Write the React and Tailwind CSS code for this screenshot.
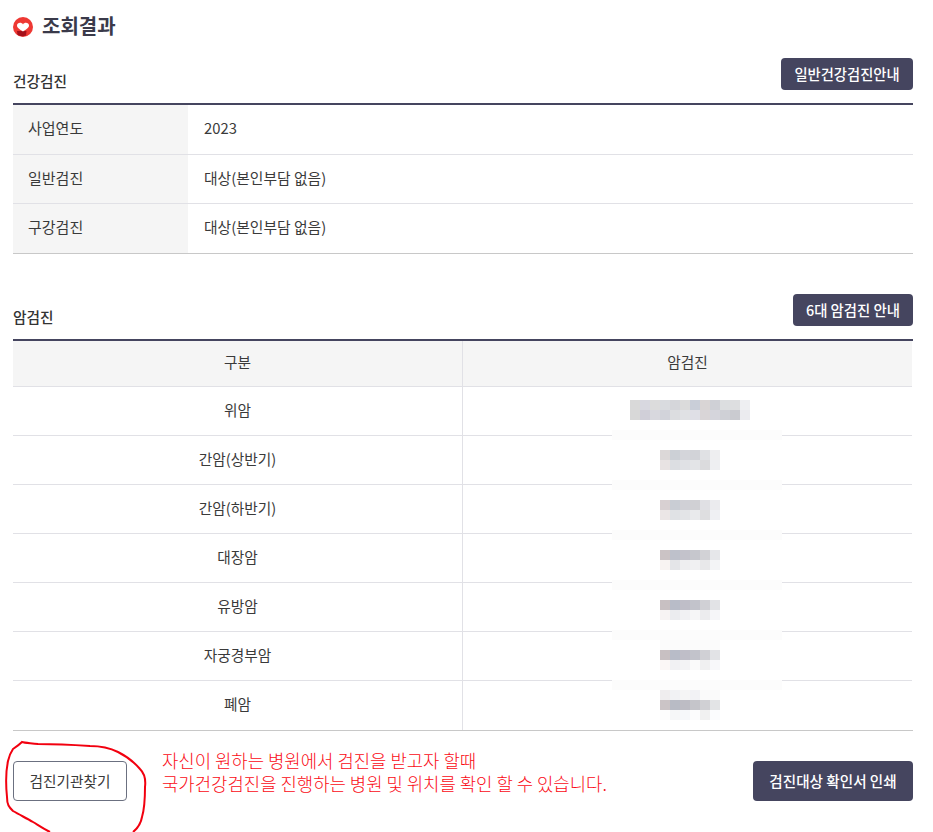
import React from 'react';

const font = { fontFamily: '"Noto Sans CJK KR", "Noto Sans", sans-serif' };

const infoRows = [
  { label: '사업연도', value: '2023', row: 'h-[50px] border-b border-[#e1e1e6]', pad: 'pb-[3px]' },
  { label: '일반검진', value: '대상(본인부담 없음)', row: 'h-[49px] border-b border-[#e1e1e6]', pad: 'pb-[2px]' },
  { label: '구강검진', value: '대상(본인부담 없음)', row: 'h-[49px]', pad: 'pb-[3px]' },
];

// blurred cells, one colour per 10px block
const soft = ['#efedee', '#f1f2f4', '#f5f5f5', '#f2f2f5', '#fafafa', '#fafafa'];
const cancerRows = [
  { name: '위암', pad: 'pt-[13px]', patch: 'top-[43px]', blur: [
    ['#d9d9d9', '#d8d8e0', '#dcdcdc', '#d9dbdf', '#d5d6da', '#dbdbdb', '#c9ced8', '#d9d5d5', '#cfd0d6', '#dcdee0', '#dddee0', '#eeeff2'],
    ['#d8d8d8', '#d0cfd8', '#d8d8de', '#d2d3da', '#dcdde0', '#e0e1e4', '#dfdfe6', '#d9d5d7', '#d5d5dc', '#cfd0d6', '#cacbd0', '#ebebef'],
  ] },
  { name: '간암(상반기)', pad: 'pt-[14px]', patch: 'top-[44px]', blur: [
    ['#dcd8d8', '#ccd0d6', '#d4d5da', '#d2d3d8', '#e0e1e4', '#eeeef0'],
    ['#e8e3e3', '#dcdee2', '#e0e1e5', '#e3e4e7', '#dbdbdd', '#eeeff2'],
  ] },
  { name: '간암(하반기)', pad: 'pt-[15px]', patch: 'top-[45px]', blur: [
    ['#d8d0d2', '#c9cdd4', '#d0d0d6', '#d0d0d4', '#e0e0e4', '#ebebee'],
    ['#ebe6e6', '#e0e2e5', '#e3e4e7', '#e9eaec', '#dedee0', '#eff0f3'],
  ] },
  { name: '대장암', pad: 'pt-[16px]', patch: 'top-[46px]', blur: [
    ['#cbc3c5', '#bec1cb', '#c3c2cb', '#c6c7cd', '#d2d2d6', '#e6e7ea'],
    ['#f8f3f2', '#e4e5e8', '#eeeef0', '#f0f0f2', '#e8e8ea', '#f3f4f6'],
  ] },
  { name: '유방암', pad: 'pt-[17px]', patch: 'top-[47px]', blur: [
    ['#c8c0c2', '#b8bcc8', '#bfbec8', '#c2c3cb', '#d0d0d5', '#e2e3e6'],
    ['#f7f3f3', '#ebecef', '#f1f1f3', '#f6f6f7', '#ececee', '#f6f6f9'],
  ] },
  { name: '자궁경부암', pad: 'pt-[8px]', patch: 'top-[48px]', blur: [
    soft.map(() => '#fbfbfb'),
    ['#c8c0c2', '#b8bcc8', '#bfbec8', '#c2c3cb', '#d0d0d5', '#e2e3e6'],
    ['#fbf7f6', '#f1f1f3', '#f3f3f5', '#fafafa', '#f0f0f1', '#f8f8fa'],
  ] },
  { name: '폐암', pad: 'pt-[9px]', blur: [
    soft,
    ['#cbc4c6', '#b8bbc5', '#bdbcc4', '#c5c5ca', '#d0d0d4', '#e3e4e6'],
    ['#fdfdfd', '#f6f7f8', '#f6f8fa', '#fcfcfd', '#f1f1f1', '#fbfcfe'],
  ] },
];

function HeartBadge() {
  return (
    <svg width="20" height="20" viewBox="0 0 20 20" className="mt-[2px] shrink-0">
      <circle cx="10" cy="10" r="10" fill="#ee3833" />
      <path d="M4 14 L13.5 14 L13 18.5 Q8 20 4.5 18 Z" fill="#a5101a" />
      <path d="M10 14.5 C7.5 13 4 11 4 8.6 C4 5.4 8.6 5 10 7.4 C11.4 5 16 5.4 16 8.6 C16 11 12.5 13 10 14.5 Z" fill="#fff" />
    </svg>
  );
}

function DarkButton({ className, children }) {
  return (
    <button className={`bg-[#45455f] text-white font-medium rounded-[4px] ${className}`}>
      {children}
    </button>
  );
}

function Mosaic({ rows }) {
  return (
    <div className="flex flex-col">
      {rows.map((row, i) => (
        <div key={i} className="flex">
          {row.map((c, j) => (
            <div key={j} className="w-[10px] h-[10px]" style={{ background: c }} />
          ))}
        </div>
      ))}
    </div>
  );
}

function SectionHead({ title, action, actionClass }) {
  return (
    <div className="flex items-start justify-between h-[32px]">
      <h3 className="text-[14.7px] font-medium text-[#333] mt-[13px] leading-5">{title}</h3>
      <DarkButton className={actionClass}>{action}</DarkButton>
    </div>
  );
}

export default function App() {
  return (
    <div className="w-[933px] h-[832px] overflow-hidden bg-white relative text-[#3a3a3a]" style={font}>
      <div className="pl-[13px] pr-5">
        <div className="flex items-start gap-[9px] pt-[15px] h-[58px]">
          <HeartBadge />
          <h2 className="text-[20px] leading-[22px] font-bold text-[#3a3a4a]">조회결과</h2>
        </div>

        <SectionHead title="건강검진" action="일반건강검진안내" actionClass="w-[132px] h-[32px] text-[14.3px]" />
        <div className="mt-[13px] border-t-2 border-[#45455f] border-b border-b-[#c8c8c8]">
          {infoRows.map((r) => (
            <div key={r.label} className={`flex ${r.row}`}>
              <div className={`w-[175px] bg-[#f5f5f5] pl-[15px] flex items-center text-[15px] ${r.pad}`}>{r.label}</div>
              <div className={`pl-[16px] flex items-center text-[14.8px] ${r.pad}`}>{r.value}</div>
            </div>
          ))}
        </div>

        <div className="mt-[40px]">
          <SectionHead title="암검진" action="6대 암검진 안내" actionClass="w-[120px] h-[32px] text-[14.4px]" />
        </div>
        <div className="mt-[13px] border-t-2 border-[#45455f] border-b border-b-[#c8c8c8] text-[14.7px]">
          <div className="flex w-[899px] h-[46px] bg-[#f5f5f5] border-b border-[#e1e1e6]">
            <div className="w-[450px] flex items-center justify-center border-r border-[#e1e1e6] pb-[3px]">구분</div>
            <div className="w-[449px] flex items-center justify-center pb-[3px]">암검진</div>
          </div>
          {cancerRows.map((row, i) => (
            <div key={row.name} className={`flex relative w-[899px] h-[49px] ${i < 6 ? 'border-b border-[#e1e1e6]' : ''}`}>
              <div className="w-[450px] flex items-center justify-center border-r border-[#e1e1e6] pb-[2px]">{row.name}</div>
              <div className={`w-[449px] pl-[5px] flex justify-center ${row.pad}`}>
                <Mosaic rows={row.blur} />
              </div>
              {row.patch && <div className={`absolute left-[599px] w-[170px] h-[10px] bg-[#fcfcfc] ${row.patch}`} />}
            </div>
          ))}
        </div>

        <div className="flex items-start mt-[30px]">
          <button className="w-[114px] h-[40px] border border-[#6b7080] rounded-[4px] text-[14.7px] bg-white">검진기관찾기</button>
          <p className="ml-[35px] -mt-[12px] text-[17.8px] leading-[23px] font-light text-[#fa0a14] whitespace-nowrap">
            자신이 원하는 병원에서 검진을 받고자 할때
            <br />
            국가건강검진을 진행하는 병원 및 위치를 확인 할 수 있습니다.
          </p>
          <DarkButton className="ml-auto w-[160px] h-[40px] text-[14.6px]">검진대상 확인서 인쇄</DarkButton>
        </div>
      </div>

      <svg className="absolute left-0 top-[725px] pointer-events-none" width="160" height="107" viewBox="0 0 160 107" fill="none">
        <path
          d="M50 107 C42 103 38 100 33 97 C26 93 20 90 13 86 C9 82 7 80 7 72 C6 62 5 50 8 36 C9 31 11 27 13 24 C16 22 19 20 22 17 C25 18 30 18 38 19 C55 19 75 20 90 21 C105 21 112 24 118 27 C126 31 134 37 140 44 C144 48 146 54 145 62 C145 72 145 82 142 92 C141 98 138 103 133 107"
          stroke="#f2000f"
          strokeWidth="2"
        />
      </svg>
    </div>
  );
}
